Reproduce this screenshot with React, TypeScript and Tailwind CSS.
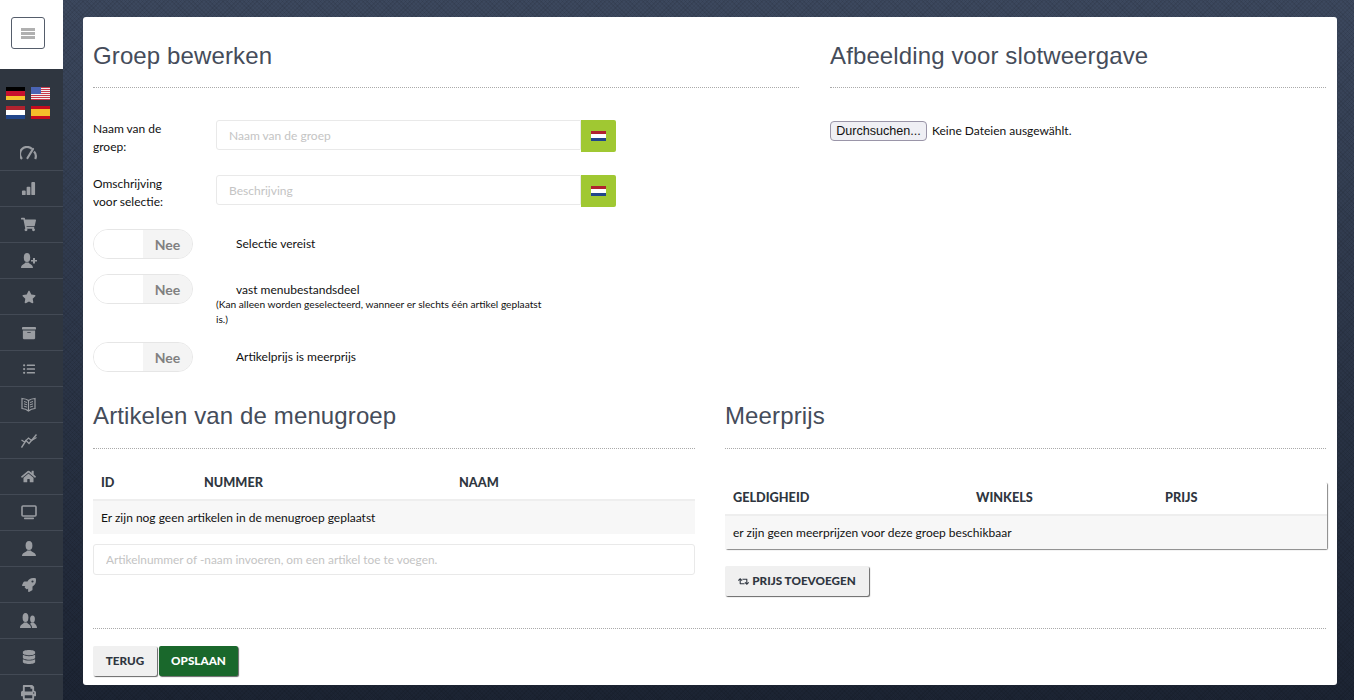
import type { ReactNode } from "react";
import {
  FaArchive,
  FaDatabase,
  FaHome,
  FaListUl,
  FaPrint,
  FaRetweet,
  FaRocket,
  FaShoppingCart,
  FaStar,
} from "react-icons/fa";
import { BsBarChartFill } from "react-icons/bs";

const GaugeIcon = () => (
  <svg width="17" height="14" viewBox="0 0 17 14" fill="none" stroke="currentColor">
    <path d="M2 13 A7 7 0 0 1 12 3" strokeWidth="2.2" />
    <path d="M14 5.5 A7 7 0 0 1 15.2 13" strokeWidth="2.2" />
    <path d="M7.5 12 L13 3" strokeWidth="2.2" strokeLinecap="round" />
  </svg>
);

const BookIcon = () => (
  <svg width="15" height="15" viewBox="0 0 15 15" fill="none" stroke="currentColor" strokeWidth="1.2">
    <path d="M7.5 3.5 C5.5 2 3 1.6 1 1.5 V11.5 C3 11.6 5.5 12.2 7.5 14 C9.5 12.2 12 11.6 14 11.5 V1.5 C12 1.6 9.5 2 7.5 3.5 Z V14" />
    <path d="M3 4.5 L6 5.5 M3 6.8 L6 7.8 M3 9.1 L6 10.1 M12 4.5 L9 5.5 M12 6.8 L9 7.8 M12 9.1 L9 10.1" strokeWidth="1" />
  </svg>
);

const TrendIcon = () => (
  <svg width="16" height="15" viewBox="0 0 16 15" fill="none" stroke="currentColor" strokeWidth="1.4">
    <path d="M0.5 14.5 L5 7.5 L8 10.5 L15.5 1.5" />
    <path d="M0.5 7 L3.5 9 L7.5 5 L10.5 7.5 L15.5 4.5" strokeWidth="1.2" />
  </svg>
);

const MonitorIcon = () => (
  <svg width="16" height="15" viewBox="0 0 16 15">
    <rect x="1" y="1" width="14" height="10" rx="1" fill="none" stroke="currentColor" strokeWidth="1.6" />
    <rect x="3" y="12.6" width="10" height="1.6" rx="0.6" fill="currentColor" />
  </svg>
);

const UserIcon = () => (
  <svg width="16" height="15" viewBox="0 0 16 15" fill="currentColor">
    <ellipse cx="8" cy="4.5" rx="3.4" ry="4.5" />
    <path d="M1 15 C1 11.8 4.8 11.4 6.2 9.5 H9.8 C11.2 11.4 15 11.8 15 15 Z" />
  </svg>
);

const UserPlusIcon = () => (
  <svg width="16" height="15" viewBox="0 0 16 15" fill="currentColor">
    <ellipse cx="6" cy="4.5" rx="3.2" ry="4.5" />
    <path d="M0 15 C0 11.8 3 11.4 4.4 9.5 H7.6 C9 11.4 12 11.8 12 15 Z" />
    <path d="M12 5 H14 V7 H16 V8.6 H14 V10.6 H12 V8.6 H10 V7 H12 Z" />
  </svg>
);

const UsersIcon = () => (
  <svg width="17" height="15" viewBox="0 0 17 15" fill="currentColor">
    <ellipse cx="5.5" cy="4.5" rx="2.9" ry="4.5" />
    <path d="M0 15 C0 11.8 2.6 11.4 4 9.5 H7 C8.4 11.4 11 11.8 11 15 Z" />
    <ellipse cx="12.5" cy="6" rx="2.4" ry="3.6" />
    <path d="M12 15 C12 12.8 11 11.6 10 11 L11.3 9.5 H13.7 C14.6 11.2 17 11.6 17 15 Z" />
  </svg>
);

const sideIcons: ReactNode[] = [
  <GaugeIcon />,
  <BsBarChartFill size={15} />,
  <FaShoppingCart size={15} />,
  <UserPlusIcon />,
  <FaStar size={14} />,
  <FaArchive size={14} />,
  <FaListUl size={12} />,
  <BookIcon />,
  <TrendIcon />,
  <FaHome size={15} />,
  <MonitorIcon />,
  <UserIcon />,
  <FaRocket size={14} />,
  <UsersIcon />,
  <FaDatabase size={14} />,
  <FaPrint size={15} />,
];

const FlagDE = () => (
  <div className="flex h-[13px] w-[19px] flex-col">
    <div className="flex-1 bg-black" />
    <div className="flex-1 bg-[#c8102e]" />
    <div className="flex-1 bg-[#f7c52e]" />
  </div>
);

const FlagNL = ({ small }: { small?: boolean }) => (
  <div className={small ? "flex h-[10px] w-[15px] flex-col" : "flex h-[13px] w-[19px] flex-col"}>
    <div className="flex-1 bg-[#b0232f]" />
    <div className="flex-1 bg-white" />
    <div className="flex-1 bg-[#21468b]" />
  </div>
);

const FlagES = () => (
  <div className="flex h-[13px] w-[19px] flex-col">
    <div className="h-[3px] bg-[#c60b1e]" />
    <div className="flex-1 bg-[#f5bd2a]" />
    <div className="h-[3px] bg-[#c60b1e]" />
  </div>
);

const FlagUS = () => (
  <svg width="19" height="13" viewBox="0 0 19 13">
    <rect width="19" height="13" fill="#f3eef0" />
    <rect y="0" width="19" height="1" fill="#c8384a" />
    <rect y="2" width="19" height="1" fill="#c8384a" />
    <rect y="4" width="19" height="1" fill="#c8384a" />
    <rect y="6" width="19" height="1" fill="#c8384a" />
    <rect y="8" width="19" height="1" fill="#c8384a" />
    <rect y="10" width="19" height="1" fill="#c8384a" />
    <rect y="12" width="19" height="1" fill="#c8384a" />
    <rect width="10" height="7" fill="#4a64b4" />
  </svg>
);

const Sidebar = () => (
  <aside className="flex h-[700px] w-[63px] shrink-0 flex-col overflow-hidden bg-[#2f3640]">
    <div className="flex h-[69px] shrink-0 items-start bg-white pl-[11px] pt-[17px]">
      <button className="flex h-[32px] w-[34px] flex-col items-center justify-center gap-[1px] rounded-[3px] border border-[#555d6b]">
        <span className="h-[3px] w-[14px] bg-[#b0b0b0]" />
        <span className="h-[3px] w-[14px] bg-[#b0b0b0]" />
        <span className="h-[3px] w-[14px] bg-[#b0b0b0]" />
      </button>
    </div>
    <div className="grid h-[66px] shrink-0 grid-cols-[19px_19px] content-start gap-x-[6px] gap-y-[6px] pl-[6px] pt-[18px]">
      <FlagDE />
      <FlagUS />
      <FlagNL />
      <FlagES />
    </div>
    {sideIcons.map((icon, i) => (
      <div
        key={i}
        className="flex h-[36px] shrink-0 items-center justify-center border-b border-[#434a55] pr-[6px] text-[#9a9da2]"
      >
        {icon}
      </div>
    ))}
  </aside>
);

const SectionTitle = ({ children, tall }: { children: ReactNode; tall?: boolean }) => (
  <h2
    className={`${tall ? "h-[46px]" : "h-[45px]"} border-b border-dotted border-[#aaaaaa] font-['Liberation_Sans',sans-serif] text-[24px] leading-[26px] tracking-[0.12px] text-[#454c5a]`}
  >
    {children}
  </h2>
);

const LangField = ({ label, placeholder }: { label: ReactNode; placeholder: string }) => (
  <div className="flex items-start">
    <div className="w-[123px] text-[12px] leading-[18px] text-[#111111]">{label}</div>
    <div className="flex h-[32px] w-[400px] items-start">
      <input
        placeholder={placeholder}
        className="h-[30px] flex-1 rounded-l-[3px] border border-[#e9e9e9] px-[12px] text-[12px] outline-none placeholder:text-[#c4c4c4]"
      />
      <div className="flex h-[32px] w-[35px] items-center justify-center rounded-r-[2px] bg-[#a0c832]">
        <FlagNL small />
      </div>
    </div>
  </div>
);

const Toggle = () => (
  <div className="flex h-[30px] w-[100px] shrink-0 overflow-hidden rounded-full border border-[#e6e6e6]">
    <div className="w-[49px] bg-white" />
    <div className="flex flex-1 items-center justify-center bg-[#f4f4f4] text-[14px] font-bold text-[#808080]">
      Nee
    </div>
  </div>
);

export default function App() {
  return (
    <div className="flex h-[700px] w-[1354px] overflow-hidden bg-[repeating-linear-gradient(45deg,rgba(0,0,0,0.07)_0_1px,transparent_1px_3px),repeating-linear-gradient(-45deg,rgba(0,0,0,0.07)_0_1px,transparent_1px_3px),linear-gradient(to_bottom,#3c485e,#1c2433)] font-['Lato',sans-serif]">
      <Sidebar />
      <main className="min-w-0 flex-1 pl-[20px] pr-[17px] pt-[17px]">
        <div className="h-[668px] rounded-[3px] bg-white pl-[10px] pr-[11px] pt-[26px]">
          {/* Top row */}
          <div className="flex h-[329px] gap-[31px]">
            <section className="w-[706px]">
              <SectionTitle>Groep bewerken</SectionTitle>
              <div className="mt-[32px] flex flex-col gap-[19px]">
                <LangField label={<>Naam van de<br />groep:</>} placeholder="Naam van de groep" />
                <LangField label={<>Omschrijving<br />voor selectie:</>} placeholder="Beschrijving" />
              </div>
              <div className="mt-[18px] flex items-center">
                <Toggle />
                <span className="ml-[43px] text-[12px] text-[#111111]">Selectie vereist</span>
              </div>
              <div className="mt-[15px] flex items-start">
                <Toggle />
                <div className="ml-[23px] w-[330px] pt-[8px]">
                  <div className="pl-[20px] text-[12px] leading-[15px] text-[#111111]">vast menubestandsdeel</div>
                  <div className="text-[10.2px] leading-[15px] text-[#111111]">
                    (Kan alleen worden geselecteerd, wanneer er slechts één artikel geplaatst is.)
                  </div>
                </div>
              </div>
              <div className="mt-[15px] flex items-center">
                <Toggle />
                <span className="ml-[43px] text-[12px] text-[#111111]">Artikelprijs is meerprijs</span>
              </div>
            </section>
            <section className="flex-1">
              <SectionTitle>Afbeelding voor slotweergave</SectionTitle>
              <div className="mt-[33px] flex items-center gap-[5px]">
                <button className="h-[20px] w-[97px] rounded-[4px] border border-[#9a95a8] bg-[#efeff4] font-['Liberation_Sans',sans-serif] text-[12.6px] text-[#111111]">
                  Durchsuchen...
                </button>
                <span className="text-[12px] text-[#111111]">Keine Dateien ausgewählt.</span>
              </div>
            </section>
          </div>

          {/* Tables row */}
          <div className="mt-[31px] flex gap-[30px]">
            <section className="w-[602px]">
              <SectionTitle tall>Artikelen van de menugroep</SectionTitle>
              <div className="mt-[18px] flex h-[34px] items-center border-b-2 border-[#eeeeee] text-[12.7px] font-black uppercase text-[#2f3640]">
                <span className="w-[103px] pl-[8px]">ID</span>
                <span className="w-[255px] pl-[8px]">Nummer</span>
                <span className="pl-[8px]">Naam</span>
              </div>
              <div className="flex h-[33px] items-center bg-[#f7f7f7] pl-[8px] text-[12px] text-[#111111]">
                Er zijn nog geen artikelen in de menugroep geplaatst
              </div>
              <input
                placeholder="Artikelnummer of -naam invoeren, om een artikel toe te voegen."
                className="mt-[10px] h-[31px] w-full rounded-[3px] border border-[#e9e9e9] px-[12px] text-[11.85px] outline-none placeholder:text-[#c4c4c4]"
              />
            </section>
            <section className="flex-1">
              <SectionTitle tall>Meerprijs</SectionTitle>
              <div className="-mr-px mt-[33px] rounded-[2px] bg-white shadow-[1px_1px_1px_#888888]">
                <div className="flex h-[34px] items-center border-b-2 border-[#eeeeee] text-[12.7px] font-black uppercase text-[#2f3640]">
                  <span className="w-[243px] pl-[8px]">Geldigheid</span>
                  <span className="w-[189px] pl-[8px]">Winkels</span>
                  <span className="pl-[8px]">Prijs</span>
                </div>
                <div className="flex h-[33px] items-center bg-[#f7f7f7] pl-[8px] text-[12px] text-[#111111]">
                  er zijn geen meerprijzen voor deze groep beschikbaar
                </div>
              </div>
              <button className="mt-[17px] flex h-[30px] w-[144px] items-center justify-center gap-[3px] rounded-[2px] bg-[#f0f0f0] text-[11.7px] font-black uppercase text-[#2f3640] shadow-[1px_1px_1px_#666666]">
                <FaRetweet size={11} />
                Prijs toevoegen
              </button>
            </section>
          </div>

          {/* Footer */}
          <div className="mt-[32px] border-t border-dotted border-[#aaaaaa] pt-[17px]">
            <div className="flex gap-[2px]">
              <button className="h-[30px] w-[64px] rounded-[2px] bg-[#f0f0f0] text-[11.7px] font-black uppercase text-[#2f3640] shadow-[1px_1px_1px_#666666]">
                Terug
              </button>
              <button className="h-[30px] w-[79px] rounded-[2px] bg-[#1a682c] text-[11.7px] font-black uppercase text-white shadow-[1px_1px_1px_#666666]">
                Opslaan
              </button>
            </div>
          </div>
        </div>
      </main>
    </div>
  );
}
